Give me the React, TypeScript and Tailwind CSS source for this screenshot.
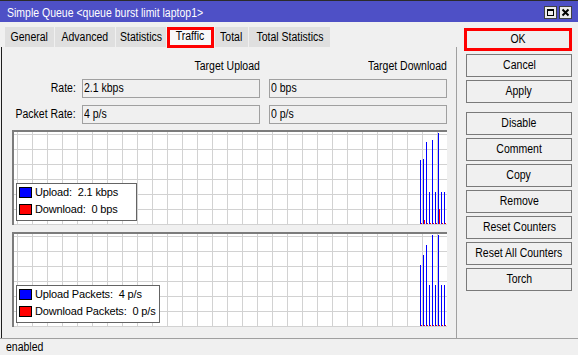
import React from "react";

// squished text, the reference font is narrower than Arial
const S = ({ children, o = "origin-left" }: { children: React.ReactNode; o?: string }) => (
  <span className={`inline-block whitespace-pre scale-x-[0.84] ${o}`}>{children}</span>
);

const tabs: [string, string, boolean?][] = [
  ["General", "w-[49px]"],
  ["Advanced", "w-[60px]"],
  ["Statistics", "w-[50px]"],
  ["Traffic", "w-[47px]", true],
  ["Total", "w-[33px]"],
  ["Total Statistics", "w-[81px]"],
];

const Field = ({ value, className }: { value: string; className: string }) => (
  <div className={`h-[19px] w-[178px] border border-[#a0a0a0] pl-[1px] flex items-center leading-[13px] ${className}`}>
    <S>{value}</S>
  </div>
);

type Legend = { color: string; text: string };

const Graph = ({
  blue,
  red,
  legend,
  legendW,
  className,
}: {
  blue: number[];
  red: number[];
  legend: Legend[];
  legendW: string;
  className: string;
}) => {
  const vs = Array.from({ length: 29 }, (_, k) => 3.5 + 15 * k);
  const hs = Array.from({ length: 7 }, (_, k) => 2.5 + 15 * k);
  return (
    <div className={`relative ml-[10px] w-[435px] h-[95px] border-t-2 border-l-2 border-[#7c7c7c] bg-white ${className}`}>
      <svg width={433} height={93} className="block" shapeRendering="crispEdges">
        {vs.map((x) => (
          <line key={"v" + x} x1={x} x2={x} y1={0} y2={93} stroke="#d2d2d2" />
        ))}
        {hs.map((y) => (
          <line key={"h" + y} x1={0} x2={433} y1={y} y2={y} stroke="#d2d2d2" />
        ))}
        {blue.map((top, i) => (
          <rect key={"b" + i} x={406 + 3 * i} y={top} width={1} height={92 - top} fill="#0000ff" />
        ))}
        {red.map((h, i) => (
          <rect key={"r" + i} x={407 + 3 * i} y={92 - h} width={1} height={h} fill="#ff0000" />
        ))}
      </svg>
      <div
        className={`absolute left-[2px] top-[51px] h-[38px] border border-[#646464] bg-white pl-[2px] pt-[3px] flex flex-col gap-[6px] text-[11px] tracking-[-0.15px] ${legendW}`}
      >
        {legend.map((l) => (
          <div key={l.text} className="flex items-center h-[11px] gap-[3px]">
            <span className={`w-[13px] h-[11px] border border-black ${l.color}`} />
            <span className="whitespace-pre leading-[11px]">{l.text}</span>
          </div>
        ))}
      </div>
    </div>
  );
};

const Btn = ({ label, className = "" }: { label: string; className?: string }) => (
  <button
    className={`w-[106px] h-[23px] border border-[#7a7a7a] bg-[#f0f0f0] flex items-center justify-center leading-[13px] ${className}`}
  >
    <S o="origin-center">{label}</S>
  </button>
);

export default function App() {
  return (
    <div className="w-[578px] h-[355px] bg-[#f0f0f0] flex flex-col overflow-hidden text-[12.5px] text-black font-['Liberation_Sans',Arial,sans-serif]">
      {/* title bar */}
      <div className="h-[22px] shrink-0 border-t border-[#2b2b2b] bg-[#4e50c6] flex items-center">
        <div className="pl-[7px] pt-[2px] text-white leading-[14px]">
          <S>Simple Queue &lt;queue burst limit laptop1&gt;</S>
        </div>
        <div className="ml-auto mr-[6px] mt-[2px] flex gap-[2px]">
          <div className="w-[13px] h-[13px] border border-[#404040] bg-[#ececec]">
            <svg width="11" height="11" className="block" shapeRendering="crispEdges">
              <rect x="2.5" y="2.5" width="6" height="6" fill="none" stroke="#000" />
              <rect x="2" y="2" width="7" height="2" fill="#000" />
            </svg>
          </div>
          <div className="w-[13px] h-[13px] border border-[#404040] bg-[#ececec]">
            <svg width="11" height="11" className="block">
              <path d="M2.5 2.5 L8.5 8.5 M8.5 2.5 L2.5 8.5" stroke="#000" strokeWidth="2" />
            </svg>
          </div>
        </div>
      </div>

      <div className="flex h-[316px] shrink-0">
        {/* left side: tabs + page */}
        <div className="w-[457px] flex flex-col">
          <div className="flex h-[20px] mt-[5px] pl-[5px] gap-[1px]">
            {tabs.map(([name, w, sel]) =>
              sel ? (
                <div
                  key={name}
                  className={`relative z-10 h-[21px] border-[3px] border-[#ff0000] bg-[#f8f8f8] flex items-center justify-center pb-[2px] leading-[13px] ${w}`}
                >
                  <S o="origin-center">{name}</S>
                </div>
              ) : (
                <div key={name} className={`h-[20px] bg-[#dfdfdf] flex items-center justify-center leading-[13px] ${w}`}>
                  <S o="origin-center">{name}</S>
                </div>
              )
            )}
          </div>

          <div className="ml-[1px] flex-1 border-l border-l-[#1e1e1e] border-r border-r-[#a0a0a0] flex flex-col">
            <div className="mt-[13px] flex h-[13px] leading-[13px]">
              <div className="w-[74px]" />
              <div className="ml-[6px] w-[178px] text-right">
                <S o="origin-right">Target Upload</S>
              </div>
              <div className="ml-[9px] w-[178px] text-right">
                <S o="origin-right">Target Download</S>
              </div>
            </div>

            <div className="mt-[6px] flex items-center h-[19px]">
              <div className="w-[74px] text-right leading-[13px]">
                <S o="origin-right">Rate:</S>
              </div>
              <Field value="2.1 kbps" className="ml-[6px]" />
              <Field value="0 bps" className="ml-[9px]" />
            </div>
            <div className="mt-[7px] flex items-center h-[19px]">
              <div className="w-[74px] text-right leading-[13px]">
                <S o="origin-right">Packet Rate:</S>
              </div>
              <Field value="4 p/s" className="ml-[6px]" />
              <Field value="0 p/s" className="ml-[9px]" />
            </div>

            <Graph
              className="mt-[6px]"
              blue={[28, 27, 10, 60, 8, 60, 1, 60, 60]}
              red={[1, 4, 1, 1, 1, 1, 15, 1, 1]}
              legendW="w-[121px]"
              legend={[
                { color: "bg-[#0000ff]", text: "Upload:  2.1 kbps" },
                { color: "bg-[#ff0000]", text: "Download:  0 bps" },
              ]}
            />
            <Graph
              className="mt-[7px]"
              blue={[31, 21, 11, 51, 1, 51, 1, 51, 51]}
              red={[1, 1, 1, 1, 1, 1, 1, 1, 1]}
              legendW="w-[144px]"
              legend={[
                { color: "bg-[#0000ff]", text: "Upload Packets:  4 p/s" },
                { color: "bg-[#ff0000]", text: "Download Packets:  0 p/s" },
              ]}
            />
          </div>
        </div>

        {/* right side: buttons */}
        <div className="flex flex-col pl-[9px] pt-[6px] gap-[3px]">
          <button className="-ml-[2px] w-[108px] h-[23px] border-[3px] border-[#ff0000] bg-[#f0f0f0] flex items-center justify-center leading-[13px]">
            <S o="origin-center">OK</S>
          </button>
          <Btn label="Cancel" />
          <Btn label="Apply" />
          <Btn label="Disable" className="mt-[6px]" />
          <Btn label="Comment" />
          <Btn label="Copy" />
          <Btn label="Remove" />
          <Btn label="Reset Counters" />
          <Btn label="Reset All Counters" />
          <Btn label="Torch" />
        </div>
      </div>

      {/* status bar */}
      <div className="h-[17px] shrink-0 border-t border-[#a0a0a0] pl-[6px] flex items-center leading-[13px]">
        <S>enabled</S>
      </div>
    </div>
  );
}
